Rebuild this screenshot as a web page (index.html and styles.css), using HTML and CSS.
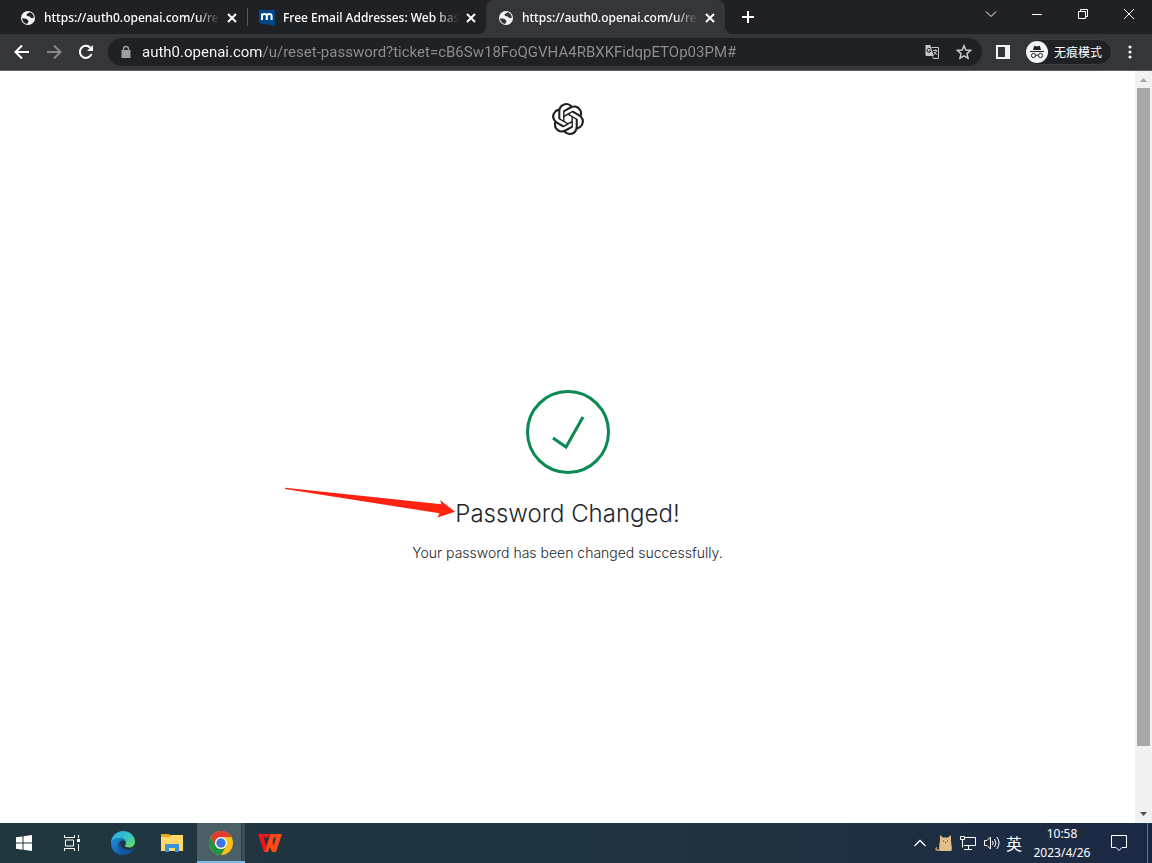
FILE: index.html
```html
<!DOCTYPE html>
<html lang="zh-CN">

<head>
  <meta charset="UTF-8">
  <meta name="viewport" content="width=device-width, initial-scale=1.0">
  <title>Password Changed!</title>
  <link rel="stylesheet" href="styles.css">
</head>

<body>
  <!-- Tabs -->
  <header class="tab-strip">
    <div class="tab">
      <svg class="tab-icon" viewBox="0 0 16 16">
        <circle cx="8" cy="8" r="7" fill="#f1f3f4" />
        <path d="M7.500 3.500l2.500-1.200A6 6 0 0 1 13.800 8H11L9.800 6.500 7.300 6 6.300 4.800zM2.100 8.300l4 .4 2 1.500.4 1.600L7 14A6 6 0 0 1 2.100 8.300z" fill="#202124" />
      </svg>
      <button class="tab-title">https://auth0.openai.com/u/re</button>
      <button class="tab-close" aria-label="Close"><svg viewBox="0 0 16 16"><path d="M4 4l8 8M12 4l-8 8" /></svg></button>
    </div>
    <div class="tab divided">
      <svg class="tab-icon" viewBox="0 0 16 16">
        <path d="M0 0h16v16L0 13z" fill="#004788" />
        <path d="M3 10V3.500M3 6c0-2.800 4.800-2.800 4.800 0v4M7.800 6c0-2.800 4.800-2.800 4.800 0v4" fill="none" stroke="#fff" stroke-width="2" />
      </svg>
      <button class="tab-title">Free Email Addresses: Web bas</button>
      <button class="tab-close" aria-label="Close"><svg viewBox="0 0 16 16"><path d="M4 4l8 8M12 4l-8 8" /></svg></button>
    </div>
    <div class="tab active">
      <svg class="tab-icon" viewBox="0 0 16 16">
        <circle cx="8" cy="8" r="7" fill="#f1f3f4" />
        <path d="M7.500 3.500l2.500-1.200A6 6 0 0 1 13.800 8H11L9.800 6.500 7.300 6 6.300 4.800zM2.100 8.300l4 .4 2 1.500.4 1.600L7 14A6 6 0 0 1 2.100 8.300z" fill="#35363a" />
      </svg>
      <button class="tab-title">https://auth0.openai.com/u/re</button>
      <button class="tab-close" aria-label="Close"><svg viewBox="0 0 16 16"><path d="M4 4l8 8M12 4l-8 8" /></svg></button>
    </div>
    <button class="new-tab" aria-label="New tab"><svg width="16" height="16" viewBox="0 0 16 16"><path d="M8 2v12M2 8h12" stroke="#fff" stroke-width="2" /></svg></button>
    <div class="window-buttons">
      <button aria-label="Search tabs"><svg width="12" height="12" viewBox="0 0 12 12"><path d="M1 3.500l5 5 5-5" /></svg></button>
      <button aria-label="Minimize"><svg width="12" height="12" viewBox="0 0 12 12"><path d="M1 6.500h10" /></svg></button>
      <button aria-label="Restore"><svg width="12" height="12" viewBox="0 0 12 12"><path d="M1.500 3.500h7v7h-7zM3.500 3.500v-2h7v7h-2" /></svg></button>
      <button aria-label="Close window"><svg width="12" height="12" viewBox="0 0 12 12"><path d="M1 1l10 10M11 1L1 11" /></svg></button>
    </div>
  </header>

  <!-- Address bar -->
  <nav class="toolbar">
    <button class="tool" aria-label="Back"><svg width="16" height="16" viewBox="0 0 16 16"><path d="M15 8H2M8 1.500L1.500 8 8 14.500" fill="none" stroke="#fff" stroke-width="2" /></svg></button>
    <button class="tool" aria-label="Forward"><svg width="16" height="16" viewBox="0 0 16 16"><path d="M1 8h13M8 1.500L14.500 8 8 14.500" fill="none" stroke="#85868a" stroke-width="2" /></svg></button>
    <button class="tool" aria-label="Reload"><svg width="16" height="16" viewBox="0 0 16 16"><path d="M13.500 10A6 6 0 1 1 12.300 3.800" fill="none" stroke="#fff" stroke-width="2" /><path d="M15 1v6H9z" fill="#fff" /></svg></button>
    <div class="omnibox">
      <svg width="12" height="14" viewBox="0 0 12 14"><path d="M1.500 5h9v8h-9z" fill="#9aa0a6" /><path d="M3.500 5.500V4a2.500 2.500 0 0 1 5 0v1.500" fill="none" stroke="#9aa0a6" stroke-width="1.300" /></svg>
      <input class="url" type="text" aria-label="Address" value="auth0.openai.com/u/reset-password?ticket=cB6Sw18FoQGVHA4RBXKFidqpETOp03PM#">
      <button class="inner-tool" aria-label="Translate"><svg width="16" height="16" viewBox="0 0 16 16">
          <path d="M1.500 1h4.800l3.500 11H2.500a1 1 0 0 1-1-1z" fill="#c7c9cc" />
          <path d="M7.500 3.500h7v11H9.500l-1-2" fill="none" stroke="#c7c9cc" />
          <path d="M6.500 5A2 2 0 1 0 6.900 7H5" fill="none" stroke="#202124" />
          <path d="M9 6.500h4.500M11.200 5.500v1M12.500 6.500c-.4 2-1.500 3.200-3 4M10 8c.6 1.200 1.600 2 3 2.500" fill="none" stroke="#c7c9cc" />
        </svg></button>
      <button class="inner-tool" aria-label="Bookmark"><svg width="16" height="16" viewBox="0 0 16 16"><path d="M8 1.800l1.800 4.300 4.700.4-3.500 3.100 1 4.600-4-2.400-4 2.400 1-4.600L1.500 6.500l4.700-.4z" fill="none" stroke="#c7c9cc" stroke-width="1.500" /></svg></button>
    </div>
    <button class="side-panel" aria-label="Side panel"><svg width="14" height="14" viewBox="0 0 14 14"><path d="M0 0h14v14H0z" fill="#f1f3f4" /><path d="M2 2h7v10H2z" fill="#35363a" /></svg></button>
    <button class="incognito">
      <svg width="22" height="22" viewBox="0 0 22 22">
        <circle cx="11" cy="11" r="11" fill="#f1f3f4" />
        <path d="M7 9l1.200-4.200 2.800.7 2.800-.7L15 9z" fill="#202124" />
        <path d="M4 10.500h14M9.500 14.500q1.500-1 3 0" fill="none" stroke="#202124" />
        <circle cx="7.500" cy="14.500" r="2.100" fill="none" stroke="#202124" />
        <circle cx="14.500" cy="14.500" r="2.100" fill="none" stroke="#202124" />
      </svg>
      无痕模式
    </button>
    <button class="menu" aria-label="Menu"><svg width="4" height="14" viewBox="0 0 4 14"><g fill="#f1f3f4"><circle cx="2" cy="2" r="1.600" /><circle cx="2" cy="7" r="1.600" /><circle cx="2" cy="12" r="1.600" /></g></svg></button>
  </nav>

  <!-- Page -->
  <div class="viewport">
    <div class="page">
      <div class="logo">
        <svg width="32" height="32" viewBox="0 0 24 24"><path fill="#202123" d="M22.2819 9.8211a5.9847 5.9847 0 0 0-.5157-4.9108 6.0462 6.0462 0 0 0-6.5098-2.9A6.0651 6.0651 0 0 0 4.9807 4.1818a5.9847 5.9847 0 0 0-3.9977 2.9 6.0462 6.0462 0 0 0 .7427 7.0966 5.98 5.98 0 0 0 .511 4.9107 6.051 6.051 0 0 0 6.5146 2.9001A5.9847 5.9847 0 0 0 13.2599 24a6.0557 6.0557 0 0 0 5.7718-4.2058 5.9894 5.9894 0 0 0 3.9977-2.9001 6.0557 6.0557 0 0 0-.7475-7.0729zm-9.022 12.6081a4.4755 4.4755 0 0 1-2.8764-1.0408l.1419-.0804 4.7783-2.7582a.7948.7948 0 0 0 .3927-.6813v-6.7369l2.02 1.1686a.071.071 0 0 1 .038.052v5.5826a4.504 4.504 0 0 1-4.4945 4.4944zm-9.6607-4.1254a4.4708 4.4708 0 0 1-.5346-3.0137l.142.0852 4.783 2.7582a.7712.7712 0 0 0 .7806 0l5.8428-3.3685v2.3324a.0804.0804 0 0 1-.0332.0615L9.74 19.9502a4.4992 4.4992 0 0 1-6.1408-1.6464zM2.3408 7.8956a4.485 4.485 0 0 1 2.3655-1.9728V11.6a.7664.7664 0 0 0 .3879.6765l5.8144 3.3543-2.0201 1.1685a.0757.0757 0 0 1-.071 0l-4.8303-2.7865A4.504 4.504 0 0 1 2.3408 7.872zm16.5963 3.8558L13.1038 8.364 15.1192 7.2a.0757.0757 0 0 1 .071 0l4.8303 2.7913a4.4944 4.4944 0 0 1-.6765 8.1042v-5.6772a.79.79 0 0 0-.407-.667zm2.0107-3.0231l-.142-.0852-4.7735-2.7818a.7759.7759 0 0 0-.7854 0L9.409 9.2297V6.8974a.0662.0662 0 0 1 .0284-.0615l4.8303-2.7866a4.4992 4.4992 0 0 1 6.6802 4.66zM8.3065 12.863l-2.02-1.1638a.0804.0804 0 0 1-.038-.0567V6.0742a4.4992 4.4992 0 0 1 7.3757-3.4537l-.142.0805L8.704 5.459a.7948.7948 0 0 0-.3927.6813zm1.0976-2.3654l2.602-1.4998 2.6069 1.4998v2.9994l-2.5974 1.4997-2.6067-1.4997Z" /></svg>
      </div>
      <main class="message">
        <svg width="84" height="84" viewBox="0 0 84 84" fill="none" stroke="#0a8a52" stroke-width="3">
          <circle cx="42" cy="42" r="40.500" />
          <path d="M27 48l13 9 17-30" />
        </svg>
        <h1>
          <svg class="arrow" width="172" height="32" viewBox="0 0 172 32"><path d="M2 5.700L158.500 22.300 157 18l15 11.700-17.500 5.800 2-4.200L2 7z" fill="#ff2211" /></svg>
          Password Changed!
        </h1>
        <p>Your password has been changed successfully.</p>
      </main>
    </div>
    <div class="scrollbar">
      <svg width="7" height="4" viewBox="0 0 7 4"><path d="M0 4l3.500-4L7 4z" fill="#a3a3a3" /></svg>
      <div class="track"><div class="thumb"></div></div>
      <svg width="7" height="4" viewBox="0 0 7 4"><path d="M0 0l3.500 4L7 0z" fill="#505050" /></svg>
    </div>
  </div>

  <!-- Taskbar -->
  <footer class="taskbar">
    <div class="system">
      <button aria-label="Start"><svg width="16" height="16" viewBox="0 0 16 16"><path d="M0 2.300L6.500 1.400v6.200H0zM7.500 1.200L16 0v7.600H7.500zM0 8.500h6.500v6.200L0 13.800zM7.500 8.500H16V16l-8.500-1.200z" fill="#fff" /></svg></button>
      <button aria-label="Task view"><svg width="16" height="16" viewBox="0 0 16 16"><path d="M.5 0v2.500h10V0M.5 16v-2.500h10V16M1.500 5h8v6h-8zM14.500 0v3M14.500 9v7" fill="none" stroke="#fff" /><path d="M13 4h3v3h-3z" fill="#fff" /></svg></button>
    </div>
    <div class="apps">
      <button aria-label="Edge"><svg width="24" height="24" viewBox="0 0 24 24">
          <defs>
            <linearGradient id="edgeTop" x1="0" y1="0" x2="1" y2="1"><stop offset="0" stop-color="#2aa6e0" /><stop offset=".5" stop-color="#35c3c9" /><stop offset="1" stop-color="#6fe04a" /></linearGradient>
            <linearGradient id="edgeLow" x1="0" y1="0" x2="1" y2="1"><stop offset="0" stop-color="#1b8edb" /><stop offset="1" stop-color="#1350a3" /></linearGradient>
          </defs>
          <path d="M0 12C0 5 5.500 0 12 0s12 4.800 12 10.500c0 4-3 6-6 6-2.500 0-4-.8-4-1.700 0-.8 1-1.200 1-3.200C15 9 12 7 8.500 7 4 7 .5 9.500 0 12z" fill="url(#edgeTop)" />
          <path d="M0 12C.5 9 4 7 8.500 7c3.500 0 6.300 1.800 6.500 4.400-.9-1.300-2-1.900-3.300-1.900-3 0-4.500 2.500-4.200 5.200.4 4 4 7.500 8.800 7.600-1.400 1-3 1.700-5 1.700C5 24 0 19 0 12z" fill="url(#edgeLow)" />
          <path d="M8.800 11c-2.500 4.500-.4 12 6.700 12.500 3-.5 5.500-2.500 7-5.200.3-.5-.1-.8-.6-.5-1.500.8-3 1.200-4.500 1.200-4.700 0-8-3-8.600-8z" fill="#14549f" />
        </svg></button>
      <button aria-label="Explorer"><svg width="22" height="20" viewBox="0 0 22 20">
          <path d="M0 1h8l2 2h12v15H0z" fill="#e8a317" />
          <path d="M0 4h8l2-2h12v16H0z" fill="#ffd867" />
          <path d="M4 11h14v8h-4v-4H8v4H4z" fill="#3a93d8" />
        </svg></button>
      <button class="running" aria-label="Chrome"><svg width="24" height="24" viewBox="0 0 24 24">
          <circle cx="12" cy="12" r="12" fill="#fbc116" />
          <path d="M1.600 6A12 12 0 0 1 22.400 6H12a6 6 0 0 0-5.200 9z" fill="#e33b2e" />
          <path d="M1.600 6l5.200 9A6 6 0 0 0 17.200 15L12 24A12 12 0 0 1 1.600 6z" fill="#229342" />
          <circle cx="12" cy="12" r="6" fill="#fff" />
          <circle cx="12" cy="12" r="4.700" fill="#3b76e8" />
        </svg></button>
      <button aria-label="WPS"><svg width="24" height="18" viewBox="0 0 24 18">
          <path d="M0 0h12l-1.500 3.500H5.500l3 8L12.500 0H17L9.500 18H6z" fill="#f0141e" />
          <path d="M12.500 0H17l-2.500 8 1.200 3.500L18 3.500h-2L17.500 0H24l-6 18h-4l-2-5-2 5H7z" fill="#ff4a1a" />
        </svg></button>
    </div>
    <div class="tray">
      <button aria-label="Hidden icons"><svg width="12" height="8" viewBox="0 0 12 8"><path d="M.5 7L6 1.500 11.500 7" fill="none" stroke="#fff" stroke-width="1.300" /></svg></button>
      <button aria-label="Cat"><svg width="18" height="16" viewBox="0 0 18 16">
          <path d="M4.500 16C3.500 10 5 7 5 5V0l3 2.500h5L16 0v6c0 3 1.500 6 .5 10z" fill="#e3bd87" />
          <path d="M5 15H2.500C.5 15 .5 13.500 2 12.500" fill="none" stroke="#c99f6d" stroke-width="1.500" />
          <path d="M8 6h1M12 6h1M10 7.500h1" stroke="#4b3727" />
        </svg></button>
      <button aria-label="Network"><svg width="16" height="14" viewBox="0 0 16 14"><path d="M5 1.500h10.500v8H4M4 13.500h8M8.500 9.500v4M.5.5h4v3h-4zM2.500 3.500v8" fill="none" stroke="#fff" /></svg></button>
      <button aria-label="Volume"><svg width="16" height="14" viewBox="0 0 16 14"><path d="M.5 4.500H3L6.500 1v12L3 9.500H.5zM8.500 5q1.500 2 0 4M10.500 3q3 4 0 8M12.800 1q4.500 6 0 12" fill="none" stroke="#fff" /></svg></button>
      <button class="ime">英</button>
      <button class="clock"><time>10:58</time><time>2023/4/26</time></button>
      <button class="notes" aria-label="Notifications"><svg width="16" height="16" viewBox="0 0 16 16"><path d="M.5.5h15v12H11L8 15.500 5 12.500H.5z" fill="none" stroke="#fff" /></svg></button>
      <div class="peek"></div>
    </div>
  </footer>
</body>

</html>
```
FILE: styles.css
```css
* {
  box-sizing: border-box;
}

body {
  margin: 0;
  height: 100vh;
  display: flex;
  flex-direction: column;
  overflow: hidden;
  background-color: #fff;
  font-family: "Noto Sans", "Noto Sans CJK SC", sans-serif;
}

button {
  display: flex;
  align-items: center;
  justify-content: center;
  padding: 0;
  border: none;
  background: none;
  color: #fff;
  font: inherit;
}

svg {
  display: block;
  flex: none;
}

/* Tabs */
.tab-strip {
  display: flex;
  height: 34px;
  padding-left: 8px;
  background-color: #202124;
}

.tab {
  position: relative;
  display: flex;
  align-items: center;
  flex: 0 1 239px;
  min-width: 0;
  padding: 1px 7px 0 12px;
}

.tab.divided::before {
  content: "";
  position: absolute;
  left: 0;
  top: 8px;
  width: 1px;
  height: 18px;
  background-color: #5a5b5e;
}

.tab.active {
  background-color: #35363a;
  border-radius: 8px 8px 0 0;
}

.tab.active::before,
.tab.active::after {
  content: "";
  position: absolute;
  bottom: 0;
  width: 8px;
  height: 8px;
}

.tab.active::before {
  right: 100%;
  background: radial-gradient(circle at 0 0, transparent 8px, #35363a 8px);
}

.tab.active::after {
  left: 100%;
  background: radial-gradient(circle at 100% 0, transparent 8px, #35363a 8px);
}

.tab-icon {
  width: 16px;
  height: 16px;
}

.tab-title {
  flex: 1;
  min-width: 0;
  margin: 0 4px 0 8px;
  justify-content: flex-start;
  white-space: nowrap;
  font-size: 12px;
  font-weight: 500;
  line-height: 18px;
  -webkit-mask-image: linear-gradient(to left, transparent, #000 24px);
  mask-image: linear-gradient(to left, transparent, #000 24px);
}

.tab-close svg {
  width: 16px;
  height: 16px;
  stroke: #fff;
  stroke-width: 2;
}

.new-tab {
  width: 28px;
  margin-left: 9px;
}

.window-buttons {
  display: flex;
  height: 28px;
  margin-left: auto;
}

.window-buttons button {
  width: 46px;
}

.window-buttons svg {
  fill: none;
  stroke: #fff;
}

/* Address bar */
.toolbar {
  display: flex;
  align-items: center;
  height: 37px;
  padding: 0 6px;
  background-color: #35363a;
  border-bottom: 1px solid #5f5c66;
}

.tool {
  width: 32px;
  height: 28px;
}

.omnibox {
  display: flex;
  align-items: center;
  flex: 1;
  min-width: 0;
  height: 28px;
  margin-left: 6px;
  padding: 0 2px 0 12px;
  border-radius: 14px;
  background-color: #202124;
}

.url {
  flex: 1;
  min-width: 0;
  margin-left: 10px;
  padding: 0;
  border: none;
  outline: none;
  font-family: Roboto, sans-serif;
  font-size: 15px;
  line-height: 24px;
  color: transparent;
  background-image: linear-gradient(to right, #fff 120px, #8d8f93 120px);
  -webkit-background-clip: text;
  background-clip: text;
}

.inner-tool {
  width: 32px;
  height: 28px;
}

.side-panel {
  width: 42px;
  height: 28px;
}

.incognito {
  gap: 6px;
  height: 26px;
  padding: 0 9px 0 1px;
  border: 1px solid #3f4045;
  border-radius: 13px;
  background-color: #202124;
  font-family: "Noto Sans CJK SC", sans-serif;
  font-size: 12px;
  line-height: 18px;
}

.menu {
  width: 32px;
  height: 28px;
  margin-left: 2px;
}

/* Page */
.viewport {
  display: flex;
  flex: 1;
  min-height: 0;
}

.page {
  display: flex;
  flex-direction: column;
  flex: 1;
  color: #22262c;
  font-family: Inter, sans-serif;
}

.logo {
  display: flex;
  justify-content: center;
  padding-top: 32px;
}

.message {
  display: flex;
  flex: 1;
  flex-direction: column;
  align-items: center;
  justify-content: center;
  padding-bottom: 4px;
}

.message h1 {
  position: relative;
  margin: 24px 0 12px;
  font-size: 24px;
  font-weight: 300;
  line-height: 32px;
}

.arrow {
  position: absolute;
  right: 100%;
  top: -16px;
  overflow: visible;
}

.message p {
  margin: 0;
  font-size: 14px;
  font-weight: 300;
  line-height: 22px;
}

.scrollbar {
  display: flex;
  flex-direction: column;
  align-items: center;
  width: 17px;
  padding: 7px 0;
  gap: 6px;
  background-color: #f1f1f1;
}

.track {
  flex: 1;
  width: 13px;
}

.thumb {
  height: 91.6%;
  background-color: #a8a8a8;
}

/* Taskbar */
.taskbar {
  display: flex;
  height: 40px;
  background: linear-gradient(to right, #203740, #203240 65%, #1b2844);
}

.system,
.apps,
.tray {
  display: flex;
}

.system button,
.apps button {
  width: 48px;
}

.apps {
  gap: 1px;
  margin-left: 3px;
}

.apps .running {
  padding-top: 2px;
  background: linear-gradient(to right, #4d5f66 44px, #2b3d44 44px, #2b3d44 45px, #3c4e55 45px);
  border-bottom: 2px solid #76b9ed;
}

.tray {
  margin-left: auto;
}

.tray button {
  width: 24px;
}

.tray .ime {
  width: 20px;
  font-family: "Noto Sans CJK SC", sans-serif;
  font-size: 16px;
}

.tray .clock {
  flex-direction: column;
  width: 76px;
  font-size: 12px;
  line-height: 19px;
}

.tray .notes {
  width: 38px;
}

.peek {
  width: 5px;
  margin-left: 9px;
  border-left: 1px solid #66708a;
}
```
